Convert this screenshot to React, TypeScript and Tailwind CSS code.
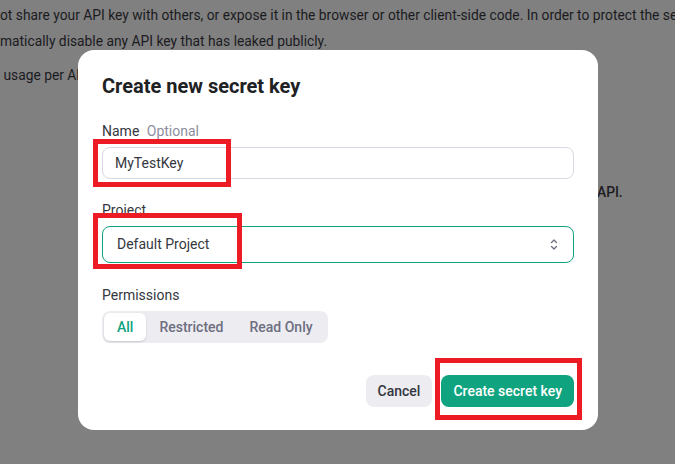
import { useState } from "react";

const PERMS = ["All", "Restricted", "Read Only"];

function UpDown() {
  return (
    <svg width="8" height="11" viewBox="0 0 8 11" fill="none" stroke="#6e6e80" strokeWidth="1.3" strokeLinecap="round" strokeLinejoin="round">
      <path d="M1.5 3.5 L4 1 L6.5 3.5" />
      <path d="M1.5 7.5 L4 10 L6.5 7.5" />
    </svg>
  );
}

export default function App() {
  const [name, setName] = useState("MyTestKey");
  const [perm, setPerm] = useState("All");

  return (
    <div className="relative w-[675px] h-[464px] overflow-hidden bg-[#808080] font-['Roboto','Liberation_Sans',sans-serif]">
      {/* page behind the overlay */}
      <div className="flex flex-col pt-[2px] text-[13.8px] leading-[26px] text-[#1b1b1f] whitespace-nowrap">
        <p>ot share your API key with others, or expose it in the browser or other client-side code. In order to protect the se</p>
        <p>matically disable any API key that has leaked publicly.</p>
        <p className="mt-[8px]">&nbsp;usage per API key</p>
        <p className="mt-[91px] pl-[597px] font-medium">API.</p>
      </div>

      {/* dialog */}
      <div className="absolute left-[78px] top-[50px] w-[520px] h-[380px] bg-white rounded-[16px] px-6 pt-6 pb-[23px] flex flex-col">
        <h2 className="text-[20px] leading-[24px] font-bold text-[#202123]">Create new secret key</h2>

        <label className="mt-[23px] text-[14px] leading-[20px] text-[#353740]">
          Name <span className="ml-1 text-[#8e8ea0]">Optional</span>
        </label>
        <input
          value={name}
          onChange={(e) => setName(e.target.value)}
          className="mt-1.5 h-[32px] w-full rounded-[8px] border border-[#d9d9e3] px-3 text-[14px] text-[#353740] outline-none"
        />

        <label className="mt-[21px] text-[14px] leading-[20px] text-[#353740]">Project</label>
        <button className="mt-1.5 h-[37px] w-full rounded-[8px] border-[1.5px] border-[#10a37f] pl-[14px] pr-[15px] flex items-center justify-between text-[14px] text-[#353740]">
          <span>Default Project</span>
          <UpDown />
        </button>

        <label className="mt-[22px] text-[14px] leading-[20px] text-[#353740]">Permissions</label>
        <div className="mt-1.5 self-start flex h-[32px] rounded-[8px] bg-[#ececf1] p-[2px]">
          {PERMS.map((p) => (
            <button
              key={p}
              onClick={() => setPerm(p)}
              className={`px-[13px] rounded-[6px] text-[14px] font-medium ${
                perm === p ? "bg-white text-[#10a37f] shadow-[0_1px_2px_rgba(0,0,0,0.15)]" : "text-[#6e6e80]"
              }`}
            >
              {p}
            </button>
          ))}
        </div>

        <div className="mt-auto flex justify-end gap-[9px]">
          <button className="h-[32px] px-3 rounded-[8px] bg-[#ececf1] text-[14px] font-medium text-[#353740]">Cancel</button>
          <button className="h-[32px] px-3 rounded-[8px] bg-[#10a37f] text-[14px] font-medium text-white">Create secret key</button>
        </div>
      </div>

      {/* red annotation boxes */}
      <div className="absolute left-[93px] top-[139px] w-[138px] h-[48px] border-[5px] border-[#ed1c24]" />
      <div className="absolute left-[93px] top-[213px] w-[149px] h-[56px] border-[5px] border-[#ed1c24]" />
      <div className="absolute left-[435px] top-[358px] w-[147px] h-[62px] border-[5px] border-[#ed1c24]" />
    </div>
  );
}
